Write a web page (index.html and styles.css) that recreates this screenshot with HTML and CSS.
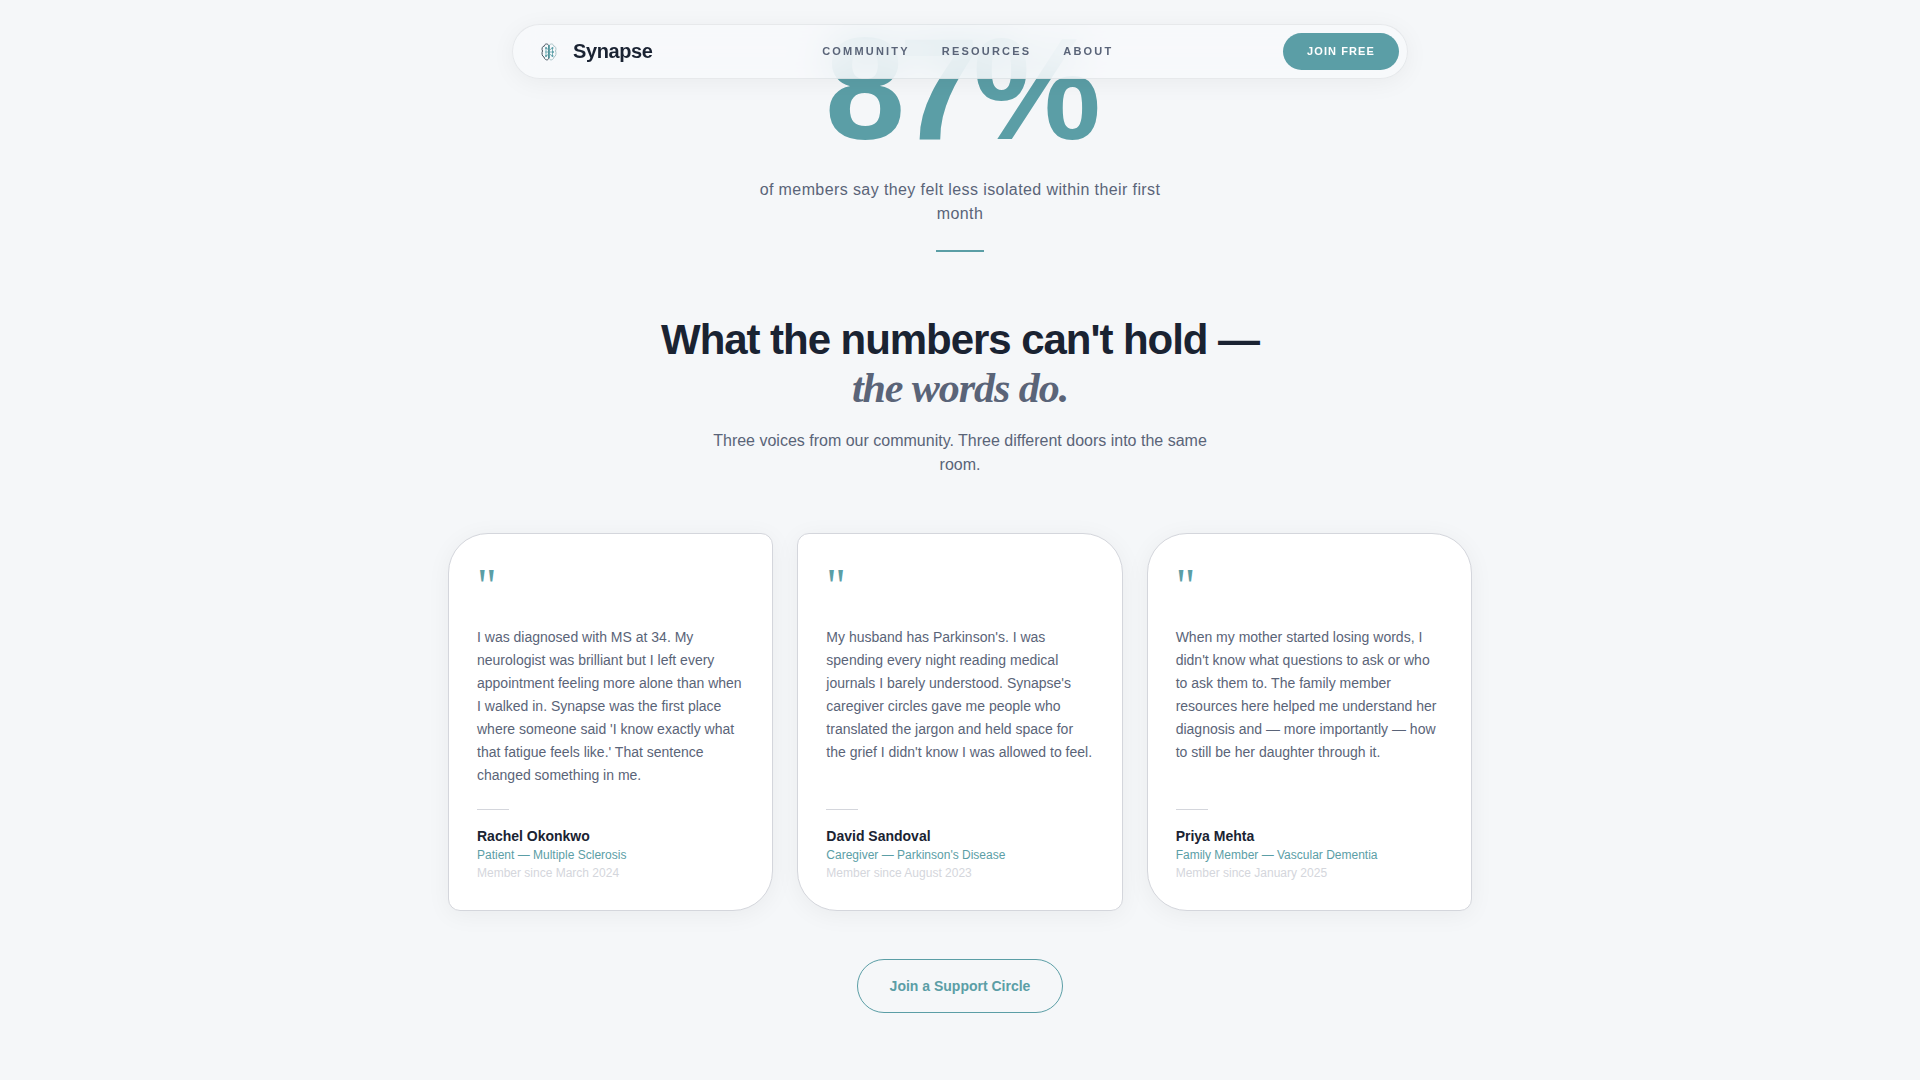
FILE: index.html
```html
<!DOCTYPE html>
<html lang="en">
<head>
<meta charset="utf-8">
<meta name="viewport" content="width=device-width, initial-scale=1">
<title>Synapse</title>
<link rel="stylesheet" href="styles.css">
</head>
<body>
<header class="site-header">
  <a class="brand" href="#">
    <svg class="brand-mark" viewBox="0 0 32 32" fill="none" aria-hidden="true">
      <path d="M15.500 9c-1-1.500-4-1.500-4 1-2.500 0-3 3-2 5-1 2-.5 5.500 1.500 6 .5 3 4 4 4.500 1.500z" stroke="#46545f" stroke-width="1"/>
      <path d="M16.500 9c1-1.500 4-1.500 4 1 2.500 0 3 3 2 5 1 2 .5 5.500-1.500 6-.5 3-4 4-4.500 1.500z" stroke="#a9c3c6" stroke-width="1"/>
      <path d="M15.500 9v13M16.500 9v13M13 12v8M19.500 12v8M13 12l3 2M12 16h8M13 20l3-2M19.500 12l-3 2M19.500 20l-3-2" stroke="#5b9ea6" stroke-width=".8"/>
      <g fill="#5b9ea6"><circle cx="13" cy="12" r="1"/><circle cx="13" cy="20" r="1"/><circle cx="19.500" cy="12" r="1"/><circle cx="20" cy="16" r="1"/><circle cx="19.500" cy="20" r="1"/></g>
    </svg>
    <span>Synapse</span>
  </a>
  <nav class="links" aria-label="Main">
    <a href="#">Community</a>
    <a href="#">Resources</a>
    <a href="#">About</a>
  </nav>
  <button class="join" type="button">Join free</button>
</header>

<main>
  <section class="stat">
    <p class="stat-value">87%</p>
    <p class="stat-label">of members say they felt less isolated within their first month</p>
    <hr class="accent-rule">
  </section>

  <section class="voices">
    <h2 class="title">What the numbers can't hold — <em>the words do.</em></h2>
    <p class="lead">Three voices from our community. Three different doors into the same room.</p>

    <div class="cards">
      <article class="card card-a">
        <span class="quote-mark" aria-hidden="true">"</span>
        <p class="quote">I was diagnosed with MS at 34. My neurologist was brilliant but I left every appointment feeling more alone than when I walked in. Synapse was the first place where someone said 'I know exactly what that fatigue feels like.' That sentence changed something in me.</p>
        <footer class="author">
          <strong class="name">Rachel Okonkwo</strong>
          <span class="role">Patient — Multiple Sclerosis</span>
          <span class="since">Member since March 2024</span>
        </footer>
      </article>
      <article class="card card-b">
        <span class="quote-mark" aria-hidden="true">"</span>
        <p class="quote">My husband has Parkinson's. I was spending every night reading medical journals I barely understood. Synapse's caregiver circles gave me people who translated the jargon and held space for the grief I didn't know I was allowed to feel.</p>
        <footer class="author">
          <strong class="name">David Sandoval</strong>
          <span class="role">Caregiver — Parkinson's Disease</span>
          <span class="since">Member since August 2023</span>
        </footer>
      </article>
      <article class="card card-c">
        <span class="quote-mark" aria-hidden="true">"</span>
        <p class="quote">When my mother started losing words, I didn't know what questions to ask or who to ask them to. The family member resources here helped me understand her diagnosis and — more importantly — how to still be her daughter through it.</p>
        <footer class="author">
          <strong class="name">Priya Mehta</strong>
          <span class="role">Family Member — Vascular Dementia</span>
          <span class="since">Member since January 2025</span>
        </footer>
      </article>
    </div>

    <a class="circle-link" href="#">Join a Support Circle</a>
  </section>
</main>
</body>
</html>
```
FILE: styles.css
```css
:root {
  --bg: #f5f7f9;
  --ink: #1a2332;
  --muted: #5a6478;
  --teal: #5b9ea6;
  --line: #d4d6dc;
}

*, *::before, *::after { box-sizing: border-box; }

body {
  margin: 0;
  background: var(--bg);
  color: var(--ink);
  font-family: "Liberation Sans", Arial, sans-serif;
}

p, h2 { margin: 0; }
a { color: inherit; text-decoration: none; }

.site-header {
  position: fixed;
  z-index: 10;
  top: 24px;
  left: 0;
  right: 0;
  max-width: 896px;
  margin: 0 auto;
  padding: 8px 8px 8px 20px;
  display: flex;
  justify-content: space-between;
  align-items: center;
  border: 1px solid rgba(26, 35, 50, 0.08);
  border-radius: 28px;
  background: rgba(248, 249, 251, 0.82);
  backdrop-filter: blur(20px);
  box-shadow: 0 4px 24px rgba(0, 0, 0, 0.05);
}

.brand {
  display: flex;
  align-items: center;
  gap: 8px;
  font-size: 20px;
  font-weight: 700;
  letter-spacing: -0.02em;
}
.brand-mark { width: 32px; height: 32px; }

.links {
  display: flex;
  gap: 32px;
  color: var(--muted);
  font-size: 11px;
  font-weight: 700;
  line-height: 15px;
  letter-spacing: 0.2em;
  text-transform: uppercase;
}

.join {
  padding: 0 24px;
  border: 0;
  border-radius: 20px;
  background: var(--teal);
  color: #fff;
  font: 700 11px/37px "Liberation Sans", Arial, sans-serif;
  letter-spacing: 0.1em;
  text-transform: uppercase;
  cursor: pointer;
}

.stat {
  padding: 18px 24px 0;
  text-align: center;
}
.stat-value {
  color: var(--teal);
  font-size: 144px;
  font-weight: 700;
  line-height: 144px;
  letter-spacing: -6px;
}
.stat-label {
  max-width: 448px;
  margin: 16px auto 24px;
  color: var(--muted);
  font-size: 16px;
  line-height: 24px;
  letter-spacing: 0.025em;
}
.accent-rule {
  width: 48px;
  height: 2px;
  margin: 0 auto;
  border: 0;
  background: var(--teal);
}

.voices {
  max-width: 1072px;
  margin: 0 auto;
  padding: 64px 24px;
  text-align: center;
}
.title {
  font-size: 42px;
  line-height: 48px;
  letter-spacing: -0.025em;
}
.title em {
  display: block;
  color: var(--muted);
  font-family: "Liberation Serif", Georgia, serif;
}
.lead {
  max-width: 512px;
  margin: 17px auto 56px;
  color: var(--muted);
  font-size: 16px;
  line-height: 24px;
}

.cards {
  display: grid;
  grid-template-columns: repeat(auto-fit, minmax(280px, 1fr));
  gap: 24px;
  text-align: left;
}
.card {
  display: flex;
  flex-direction: column;
  padding: 28px;
  border: 1px solid var(--line);
  background: #fff;
  box-shadow: 0 4px 24px rgba(0, 0, 0, 0.05);
}
.card-a { border-radius: 40px 12px; }
.card-b { border-radius: 12px 40px; }
.card-c { border-radius: 40px 40px 12px 40px; }

.quote-mark {
  margin-bottom: 16px;
  color: var(--teal);
  font-family: "Liberation Serif", Georgia, serif;
  font-size: 48px;
  line-height: 48px;
}
.quote {
  margin-bottom: auto;
  color: var(--muted);
  font-size: 14px;
  line-height: 23px;
}
.author {
  display: flex;
  flex-direction: column;
  margin-top: 22px;
  font-size: 12px;
  line-height: 18px;
}
.author::before {
  content: "";
  width: 32px;
  height: 1px;
  margin-bottom: 16px;
  background: var(--line);
}
.name {
  font-size: 14px;
  line-height: 20px;
}
.role { color: var(--teal); }
.since { color: var(--line); }

.circle-link {
  display: inline-block;
  margin-top: 48px;
  padding: 0 32px;
  border: 1px solid var(--teal);
  border-radius: 28px;
  color: var(--teal);
  font-size: 14px;
  font-weight: 700;
  line-height: 52px;
}
```
